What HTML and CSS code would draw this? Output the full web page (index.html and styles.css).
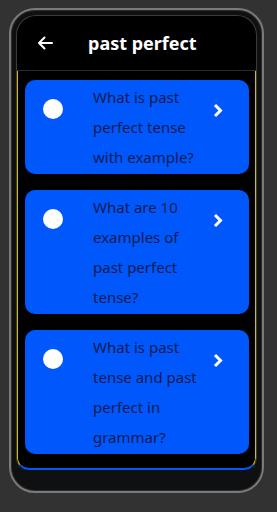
FILE: index.html
```html
<!DOCTYPE html>
<html lang="en">

<head>
    <meta charset="UTF-8">
    <meta name="viewport" content="width=device-width, initial-scale=1.0">
    <title>past perfect</title>
    <link rel="stylesheet" href="styles.css">
</head>

<body>
    <div class="phone">
        <div class="screen">
            <div class="header">
                <svg class="back" width="16" height="14" viewBox="0 0 16 14">
                    <path d="M15 7H2M7.5 1.5L2 7l5.5 5.5" fill="none" stroke="#fff" stroke-width="2" stroke-linecap="round" stroke-linejoin="round"/>
                </svg>
                <div class="title">past perfect</div>
            </div>

            <div class="list">
                <div class="card">
                    <div class="dot"></div>
                    <div class="question">What is past perfect tense with example?</div>
                    <svg class="chevron" width="10" height="15" viewBox="0 0 10 15">
                        <path d="M2 2l5.5 5.5L2 13" fill="none" stroke="#fff" stroke-width="3"/>
                    </svg>
                </div>
                <div class="card">
                    <div class="dot"></div>
                    <div class="question">What are 10 examples of past perfect tense?</div>
                    <svg class="chevron" width="10" height="15" viewBox="0 0 10 15">
                        <path d="M2 2l5.5 5.5L2 13" fill="none" stroke="#fff" stroke-width="3"/>
                    </svg>
                </div>
                <div class="card">
                    <div class="dot"></div>
                    <div class="question">What is past tense and past perfect in grammar?</div>
                    <svg class="chevron" width="10" height="15" viewBox="0 0 10 15">
                        <path d="M2 2l5.5 5.5L2 13" fill="none" stroke="#fff" stroke-width="3"/>
                    </svg>
                </div>
            </div>
        </div>
    </div>
</body>

</html>
```

FILE: styles.css
```css
body {
    margin: 0;
    padding: 8px 0 0 9px;
    width: 277px;
    height: 512px;
    box-sizing: border-box;
    background: #323232;
    font-family: 'Noto Sans', sans-serif;
    overflow: hidden;
}

/* phone frame */
.phone {
    width: 255px;
    height: 485px;
    box-sizing: border-box;
    border: 2px solid #7a7a7a;
    border-radius: 26px;
    background: #0e1011;
    padding: 5px;
    box-shadow: inset 0 0 0 1px #2a2c2d;
}

.screen {
    background: #000;
    border: 1px solid #3a3b3c;
    border-bottom: none;
    border-radius: 20px 20px 12px 12px;
    overflow: hidden;
}

.header {
    height: 54px;
    display: flex;
    align-items: center;
    padding-left: 20px;
    border-bottom: 1px solid #2b2b2b;
}

.back {
    display: block;
}

.title {
    margin-left: 35px;
    color: #fff;
    font-size: 18px;
    font-weight: bold;
}

/* question cards */
.list {
    display: flex;
    flex-direction: column;
    gap: 16px;
    padding: 9px 6px 14px 7px;
    border-left: 1px solid #d2c000;
    border-right: 1px solid #d2c000;
    border-bottom: 2px solid #0057fb;
    border-radius: 0 0 12px 12px;
}

.card {
    display: flex;
    align-items: flex-start;
    background: #0057fb;
    border-radius: 10px;
    padding: 2px 0;
}

.dot {
    flex: none;
    width: 20px;
    height: 20px;
    border-radius: 50%;
    background: #fff;
    margin: 17px 0 0 18px;
}

.question {
    width: 110px;
    margin-left: 30px;
    color: #0d1c4f;
    font-size: 15px;
    line-height: 30px;
}

.chevron {
    flex: none;
    margin: 21px 26px 0 auto;
}
```
